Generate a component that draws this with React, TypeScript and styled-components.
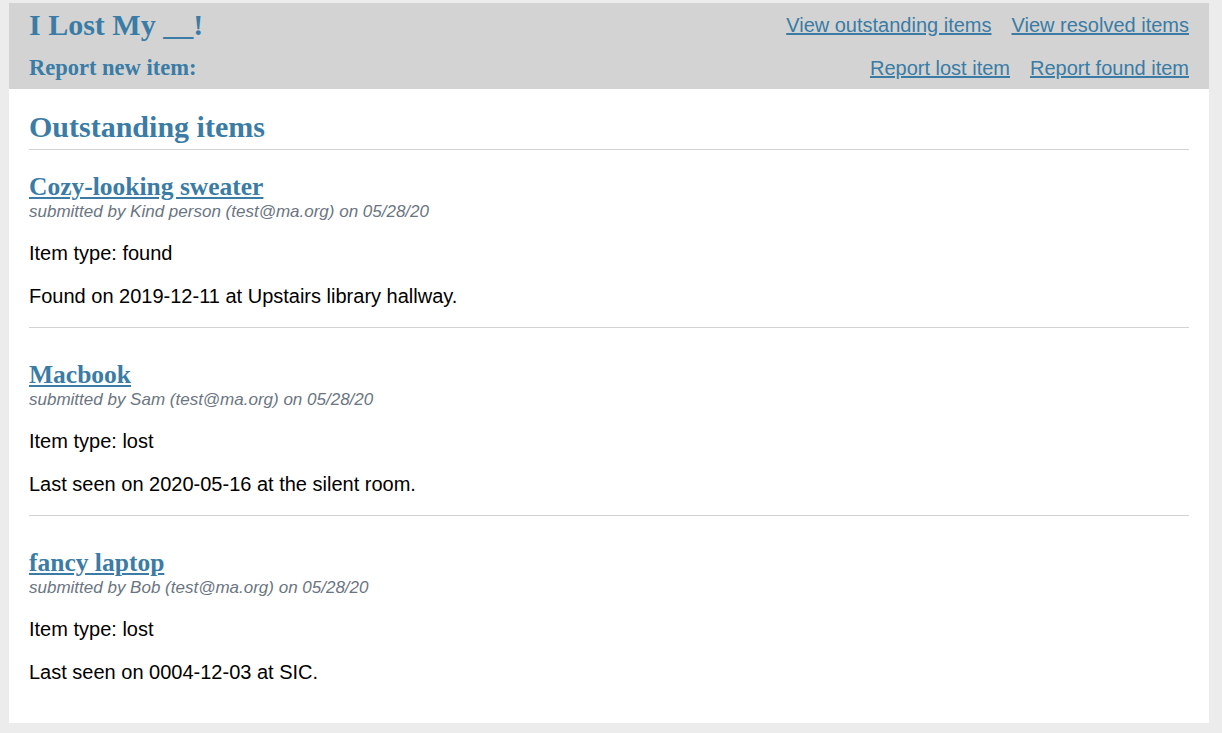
import React from "react";
import styled, { createGlobalStyle } from "styled-components";

const Global = createGlobalStyle`
  html, body { margin: 0; padding: 0; background: #ececec; }
  body { padding: 3px 13px 10px 9px; font-family: "Liberation Sans", Arial, sans-serif; }
`;

const BLUE = "#3a7ca5";

const Page = styled.div`
  background: #fff;
  width: 1200px;
`;

const Header = styled.header`
  background: #d3d3d3;
  padding: 0 20px;
  height: 86px;
  display: grid;
  grid-template-columns: 1fr auto;
  grid-template-rows: 44px 42px;
  align-items: center;
`;

const SiteTitle = styled.h1`
  margin: 0;
  font-family: "Liberation Serif", "Times New Roman", serif;
  font-size: 30px;
  font-weight: bold;
  color: ${BLUE};
`;

const SubTitle = styled.h3`
  margin: 0;
  font-family: "Liberation Serif", "Times New Roman", serif;
  font-size: 22.5px;
  font-weight: bold;
  color: ${BLUE};
`;

const NavLinks = styled.nav`
  display: flex;
  gap: 20px;
  justify-content: flex-end;
`;

const NavLink = styled.a`
  font-size: 20px;
  color: ${BLUE};
  text-decoration: underline;
`;

const Main = styled.main`
  padding: 21px 20px 20px;
`;

const SectionTitle = styled.h2`
  margin: 0;
  padding-bottom: 5px;
  font-family: "Liberation Serif", "Times New Roman", serif;
  font-size: 30px;
  line-height: 34px;
  font-weight: bold;
  color: ${BLUE};
  border-bottom: 1px solid #d3d3d3;
`;

const Item = styled.article<{ $last?: boolean }>`
  padding-top: 22px;
  padding-bottom: 19px;
  border-bottom: ${(p) => (p.$last ? "none" : "1px solid #d3d3d3")};
  & + & { padding-top: 32px; }
`;

const ItemTitle = styled.a`
  display: block;
  width: fit-content;
  font-family: "Liberation Serif", "Times New Roman", serif;
  font-size: 25.5px;
  font-weight: bold;
  color: ${BLUE};
  text-decoration: underline;
  line-height: 30px;
`;

const Meta = styled.div`
  font-style: italic;
  font-size: 17px;
  color: #6b7582;
  line-height: 20px;
`;

const Para = styled.p`
  margin: 20px 0 0;
  font-size: 20px;
  line-height: 23px;
  color: #000;
`;

const items = [
  {
    title: "Cozy-looking sweater",
    by: "Kind person",
    type: "found",
    text: "Found on 2019-12-11 at Upstairs library hallway.",
  },
  {
    title: "Macbook",
    by: "Sam",
    type: "lost",
    text: "Last seen on 2020-05-16 at the silent room.",
  },
  {
    title: "fancy laptop",
    by: "Bob",
    type: "lost",
    text: "Last seen on 0004-12-03 at SIC.",
  },
];

export default function App() {
  return (
    <>
      <Global />
      <Page>
        <Header>
          <SiteTitle>I Lost My __!</SiteTitle>
          <NavLinks>
            <NavLink href="#">View outstanding items</NavLink>
            <NavLink href="#">View resolved items</NavLink>
          </NavLinks>
          <SubTitle>Report new item:</SubTitle>
          <NavLinks>
            <NavLink href="#">Report lost item</NavLink>
            <NavLink href="#">Report found item</NavLink>
          </NavLinks>
        </Header>
        <Main>
          <SectionTitle>Outstanding items</SectionTitle>
          {items.map((it, i) => (
            <Item key={i} $last={i === items.length - 1}>
              <ItemTitle href="#">{it.title}</ItemTitle>
              <Meta>
                submitted by {it.by} (test@ma.org) on 05/28/20
              </Meta>
              <Para>Item type: {it.type}</Para>
              <Para>{it.text}</Para>
            </Item>
          ))}
        </Main>
      </Page>
    </>
  );
}
